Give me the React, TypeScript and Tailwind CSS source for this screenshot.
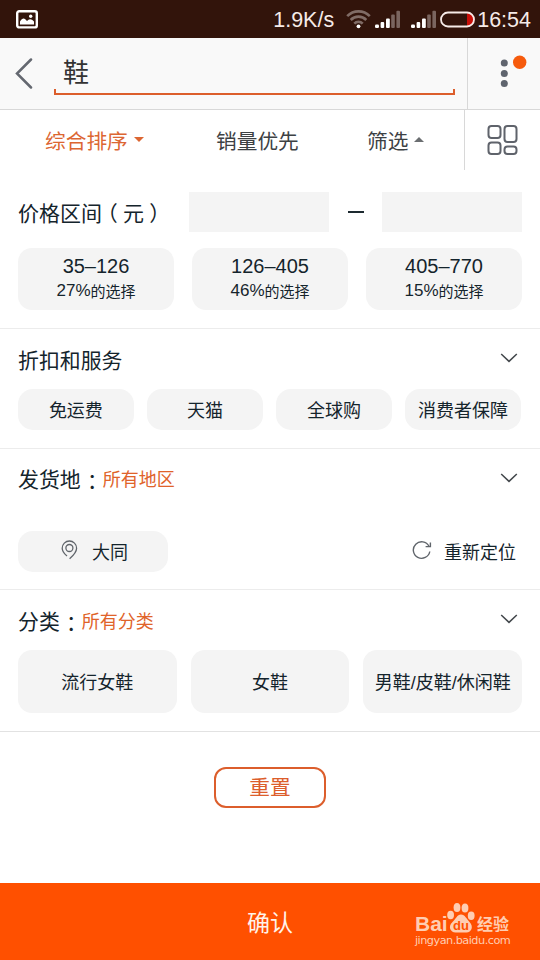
import React, { useState } from 'react';

const priceRanges = [
  { range: '35–126', percent: '27%' },
  { range: '126–405', percent: '46%' },
  { range: '405–770', percent: '15%' },
];

const services = ['免运费', '天猫', '全球购', '消费者保障'];

const categories = ['流行女鞋', '女鞋', '男鞋/皮鞋/休闲鞋'];

// Full-width colon, centred in its cell and set on the baseline
function Colon() {
  return <span className="font-['Noto_Sans_CJK_TC',sans-serif] w-[22px] pl-[1px] pt-[4px]">：</span>;
}

// Full-width bracket, centred in its cell
function Bracket({ children }: { children: React.ReactNode }) {
  return <span className="w-[21px] text-center [font-feature-settings:'halt']">{children}</span>;
}

function ChevronDown() {
  return (
    <svg className="w-[18px] h-[10px] mr-[4px] mb-[3px]" viewBox="0 0 18 10" fill="none" stroke="#43484c" strokeWidth="1.5">
      <path d="M1.2 1 9 8.4 16.8 1" />
    </svg>
  );
}

function Signal() {
  return (
    <svg className="w-[26px] h-[19px]" viewBox="0 0 26 19">
      <rect x="0" y="14.5" width="4" height="3.5" rx="1.2" fill="#fff" />
      <rect x="5.6" y="12" width="3.6" height="6" rx="1" fill="#fff" />
      <rect x="11" y="8.5" width="3.8" height="9.5" rx="1" fill="#fff" />
      <rect x="16.2" y="4.5" width="3.6" height="13.5" rx="1" fill="#7a655f" />
      <rect x="21.4" y="0.8" width="3.6" height="17.2" rx="1" fill="#7a655f" />
    </svg>
  );
}

function StatusBar() {
  return (
    <div className="h-[38px] shrink-0 bg-[#32140b] flex items-center pl-4 pr-[9px] text-[#f6ebe8] font-['Liberation_Sans',sans-serif]">
      <svg className="w-[22px] h-[19px]" viewBox="0 0 22 19">
        <rect x="1.2" y="1.2" width="19.6" height="16.2" rx="2" fill="none" stroke="#fff" strokeWidth="2.4" />
        <path d="M4 14.5v-3c1.5-2.5 3.5-4 5-2.5l2 2 1.5-1.2c1.5-1.2 3.5-.5 5.5 1.7v3z" fill="#fff" />
        <circle cx="14.7" cy="6.2" r="1.7" fill="#fff" />
      </svg>
      <div className="ml-auto flex items-center">
        <span className="text-[21.5px] leading-[38px] pt-[2px] mr-[12px]">1.9K/s</span>
        <svg className="w-[25px] h-[20px] mr-[4px]" viewBox="0 0 25 20" fill="none" stroke="#806c66" strokeWidth="2.6">
          <path d="M1.2 7.2C7.5.7 17.5.7 23.8 7.2" />
          <path d="M4.7 11c4.3-4.5 11.3-4.5 15.6 0" />
          <path d="M8.3 14.7c2.3-2.6 6.1-2.6 8.4 0" />
          <circle cx="12.5" cy="17.3" r="1.9" fill="#fff" stroke="none" />
        </svg>
        <Signal />
        <span className="w-[10px]" />
        <Signal />
        <svg className="w-[35px] h-[17px] ml-[3px]" viewBox="0 0 35 17">
          <path d="M27 2h2.5a5 6.5 0 0 1 0 13H27z" fill="#c80f08" />
          <rect x="1" y="1.5" width="33" height="14" rx="7" fill="none" stroke="#f6ebe8" strokeWidth="1.8" />
        </svg>
        <span className="text-[21.5px] leading-[38px] pt-[2px] ml-[2px]">16:54</span>
      </div>
    </div>
  );
}

function SearchHeader() {
  const [query, setQuery] = useState('鞋');

  return (
    <div className="h-[72px] shrink-0 bg-[#f9f9f9] border-b border-[#d8d8d8] flex">
      <button className="w-[54px] flex items-center pl-[15px]">
        <svg className="w-[18px] h-[32px]" viewBox="0 0 18 32" fill="none" stroke="#646870" strokeWidth="2.5" strokeLinecap="round">
          <path d="M16 1.5 2 15.5 16 29.5" />
        </svg>
      </button>
      <div className="w-[401px] flex flex-col">
        <input
          value={query}
          onChange={(e) => setQuery(e.target.value)}
          className="h-[51px] pt-[14px] pl-[9px] text-[26px] text-[#333] outline-none bg-transparent"
        />
        <div className="h-[6px] border-2 border-t-0 border-[#dc5e2c]" />
      </div>
      <div className="ml-[12px] flex-1 border-l border-[#d8d8d8] flex pl-[32px] pt-[15px]">
        <svg className="w-[32px] h-[36px]" viewBox="0 0 32 36">
          <circle cx="4.3" cy="10" r="3.5" fill="#5f646e" />
          <circle cx="4.3" cy="20.5" r="3.5" fill="#5f646e" />
          <circle cx="4.3" cy="30.5" r="3.5" fill="#5f646e" />
          <circle cx="19.7" cy="9.3" r="6.7" fill="#f65b0d" />
        </svg>
      </div>
    </div>
  );
}

function SortTabs() {
  return (
    <div className="h-[60px] shrink-0 flex text-[20.7px] text-[#3d4144] leading-[58px]">
      <button className="w-[171px] h-[59px] pl-[45px] flex items-center text-[#dc6632]">
        综合排序
        <svg className="w-[10px] h-[5px] ml-[6px]" viewBox="0 0 10 5">
          <path d="M0 0h10L5 5z" fill="#dc6632" />
        </svg>
      </button>
      <button className="w-[173px] h-[59px] pl-[45px] text-left">销量优先</button>
      <button className="w-[120px] h-[59px] pl-[23px] flex items-center">
        筛选
        <svg className="w-[10px] h-[5px] ml-[6px]" viewBox="0 0 10 5">
          <path d="M0 5h10L5 0z" fill="#6b6e71" />
        </svg>
      </button>
      <div className="flex-1 border-l border-[#d8d8d8] pl-[22px] flex items-center">
        <svg className="w-[32px] h-[32px]" viewBox="0 0 32 32" fill="none" stroke="#5f636b" strokeWidth="2">
          <rect x="1.5" y="2" width="12" height="12" rx="3" />
          <rect x="17.5" y="2" width="12" height="16" rx="3" />
          <rect x="1.5" y="18.5" width="12" height="11.5" rx="3" />
          <rect x="17.5" y="22.5" width="12" height="7.5" rx="3" />
        </svg>
      </div>
    </div>
  );
}

function BaiduMark() {
  return (
    <div className="absolute left-[415px] top-[19px] w-[98px] text-[#ffcdb2]">
      <div className="flex items-end h-[31px]">
        <span className="w-[32px] text-[21px] leading-[22px] font-bold font-['Liberation_Sans',sans-serif] h-[20px]">Bai</span>
        <svg className="w-[28px] h-[30px]" viewBox="0 0 28 30">
          <ellipse cx="3.6" cy="12" rx="3.4" ry="4.2" fill="currentColor" />
          <ellipse cx="10" cy="4.6" rx="3.4" ry="4.5" fill="currentColor" />
          <ellipse cx="18" cy="5" rx="3.4" ry="4.5" fill="currentColor" />
          <ellipse cx="24.2" cy="12.8" rx="3.4" ry="4.2" fill="currentColor" />
          <path d="M14 11.5c4 0 5.5 4.5 8.5 7.5 4.5 4.5 2 10.500-3 10.500H8.500c-5 0-8-6-3-10.500C9 16 10 11.5 14 11.5z" fill="currentColor" />
          <text x="14" y="27" textAnchor="middle" fontSize="13" fontWeight="bold" fill="#ff5000" fontFamily="Liberation Sans, sans-serif">du</text>
        </svg>
        <span className="ml-[2px] text-[16px] leading-[20px] font-bold">经验</span>
      </div>
      <div className="text-[11.3px] leading-[16px] whitespace-nowrap font-['DejaVu_Sans',sans-serif] -tracking-[0.53px]">jingyan.baidu.com</div>
    </div>
  );
}

export default function App() {
  return (
    <div className="w-[540px] h-[960px] overflow-hidden bg-white flex flex-col text-[#14242c] font-['Noto_Sans_CJK_SC',sans-serif]">
      <StatusBar />
      <SearchHeader />
      <SortTabs />

      <section className="h-[159px] shrink-0 pt-[22px] px-[18px] border-b border-[#ececec]">
        <div className="flex items-center h-[40px]">
          <h2 className="w-[171px] pt-[2px] text-[21px] whitespace-nowrap flex">
            价格区间
            <Bracket>（</Bracket>
            元
            <Bracket>）</Bracket>
          </h2>
          <input className="w-[140px] h-[40px] bg-[#f4f4f4] outline-none" />
          <span className="w-[16px] h-[2px] ml-[19px] mr-[18px] bg-[#1d2a30]" />
          <input className="w-[140px] h-[40px] bg-[#f4f4f4] outline-none" />
        </div>
        <div className="grid grid-cols-3 gap-[18px] mt-[16px]">
          {priceRanges.map((item) => (
            <button key={item.range} className="h-[62px] rounded-[14px] bg-[#f4f4f4] flex flex-col items-center">
              <span className="text-[20px] leading-[26px] mt-[5px] mb-px font-['Liberation_Sans',sans-serif]">{item.range}</span>
              <span className="text-[15px] leading-[22px] flex items-center">
                <span className="text-[17px] font-['Liberation_Sans',sans-serif]">{item.percent}</span>
                的选择
              </span>
            </button>
          ))}
        </div>
      </section>

      <section className="h-[120px] shrink-0 pt-[15px] px-[18px] border-b border-[#ececec]">
        <div className="flex items-center justify-between h-[30px]">
          <h2 className="text-[20.9px] pt-[1px]">折扣和服务</h2>
          <ChevronDown />
        </div>
        <div className="grid grid-cols-4 gap-[13.3px] mt-[15px] mr-px">
          {services.map((name) => (
            <button key={name} className="h-[41px] rounded-[15px] bg-[#f4f4f4] text-[18px] whitespace-nowrap">
              {name}
            </button>
          ))}
        </div>
      </section>

      <section className="h-[141px] shrink-0 pt-[15px] px-[18px] border-b border-[#ececec]">
        <div className="flex items-center justify-between h-[30px]">
          <h2 className="text-[20.9px] flex items-center">
            发货地
            <Colon />
            <span className="text-[18px] text-[#e0632a] -mt-[2px]">所有地区</span>
          </h2>
          <ChevronDown />
        </div>
        <div className="flex items-center justify-between mt-[37px] text-[18px]">
          <button className="w-[150px] h-[41px] rounded-[15px] bg-[#f4f4f4] flex items-center pl-[43px]">
            <svg className="w-[17px] h-[20px] mr-[14px] -mt-[4px]" viewBox="0 0 17 20" fill="none" stroke="#60656b" strokeWidth="1.3">
              <path d="M6 16C3 13.5 1.2 11 1.2 8.2a7.2 7.2 0 0 1 14.4 0c0 3.6-3 7-7 10.6" />
              <circle cx="8.4" cy="8" r="3.5" />
            </svg>
            大同
          </button>
          <button className="flex items-center mr-[6px]">
            <svg className="w-[20px] h-[20px] mr-[12px] -mt-[4px]" viewBox="0 0 20 20" fill="none" stroke="#60656b" strokeWidth="1.4">
              <path d="M17.8 11.5A8.3 8.3 0 1 1 17 6.2" />
              <path d="M13.6 6.6h4.8V2.6" />
            </svg>
            重新定位
          </button>
        </div>
      </section>

      <section className="h-[142px] shrink-0 pt-[15px] px-[18px] border-b border-[#e2e2e2]">
        <div className="flex items-center justify-between h-[30px]">
          <h2 className="text-[20.9px] flex items-center pt-[2px]">
            分类
            <Colon />
            <span className="text-[18px] text-[#e0632a] -mt-[2px]">所有分类</span>
          </h2>
          <ChevronDown />
        </div>
        <div className="grid grid-cols-3 gap-[14px] mt-[15px]">
          {categories.map((name) => (
            <button
              key={name}
              className="h-[63px] pt-[4px] rounded-[14px] bg-[#f4f4f4] text-[18px] whitespace-nowrap font-['Liberation_Sans','Noto_Sans_CJK_SC',sans-serif]"
            >
              {name}
            </button>
          ))}
        </div>
      </section>

      <div className="flex-1 flex justify-center pt-[35px]">
        <button className="w-[112px] h-[41px] rounded-[12px] border-2 border-[#dc5e2c] text-[#dc5e2c] text-[20.7px] leading-[35px] pb-[2px]">
          重置
        </button>
      </div>

      <div className="relative h-[77px] shrink-0 bg-[#ff5000] text-[#fff3ea]">
        <button className="w-full h-full text-[23px]">确认</button>
        <BaiduMark />
      </div>
    </div>
  );
}
